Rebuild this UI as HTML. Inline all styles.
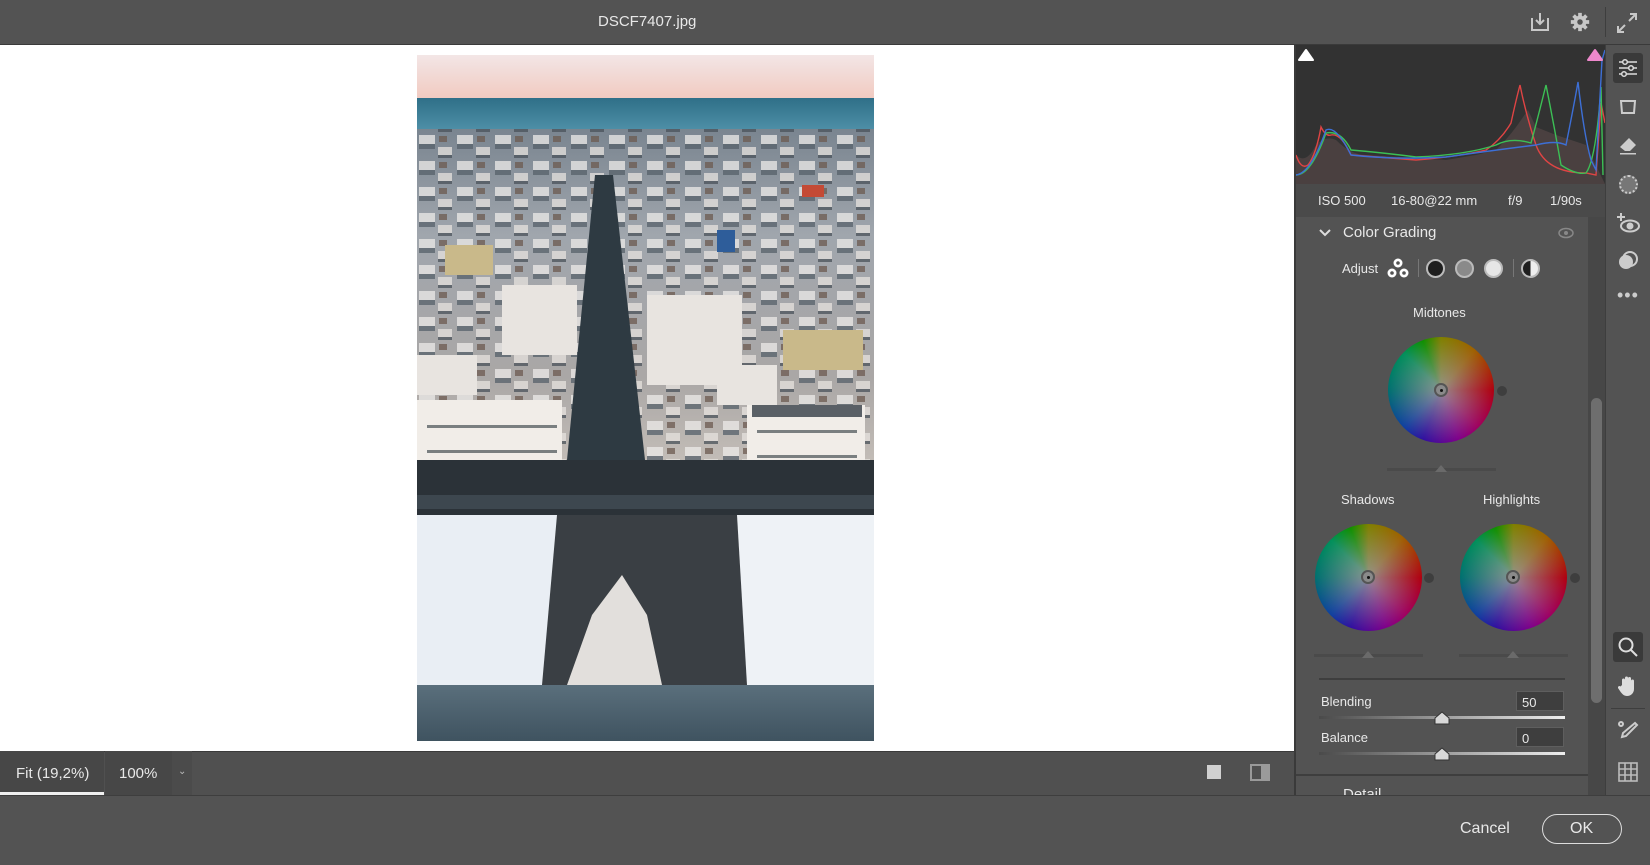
<!DOCTYPE html>
<html><head><meta charset="utf-8"><style>
*{margin:0;padding:0;box-sizing:border-box}
body{width:1650px;height:865px;background:#535353;font-family:"Liberation Sans",sans-serif;color:#e6e6e6;position:relative;overflow:hidden}
.abs{position:absolute}
.t{position:absolute;font-size:13px;color:#e8e8e8;white-space:nowrap}
</style></head><body>
<div class="abs" style="left:0;top:0;width:1650px;height:45px;background:#535353;border-bottom:1px solid #3a3a3a"></div>
<div class="t" style="left:598px;top:13px;font-size:15px">DSCF7407.jpg</div>
<svg class="abs" style="left:1528px;top:10px" width="24" height="24" viewBox="0 0 24 24" fill="none" stroke="#c8c8c8" stroke-width="2"><path d="M4 8v12h16V8M12 3v11M8 10l4 4 4-4"/></svg>
<svg class="abs" style="left:1569px;top:11px" width="22" height="22" viewBox="0 0 24 24"><circle cx="12" cy="12" r="7" fill="#c8c8c8"/><g stroke="#c8c8c8" stroke-width="4"><path d="M12 2v20M2 12h20M5 5l14 14M19 5L5 19"/></g><circle cx="12" cy="12" r="3" fill="#535353"/></svg>
<div class="abs" style="left:1605px;top:7px;width:1px;height:30px;background:#3e3e3e"></div>
<svg class="abs" style="left:1615px;top:11px" width="24" height="24" viewBox="0 0 24 24" fill="none" stroke="#c8c8c8" stroke-width="2"><path d="M14 10l7-7M15 3h6v6M10 14l-7 7M3 15v6h6"/></svg>

<div class="abs" style="left:0;top:45px;width:1294px;height:706px;background:#fff"></div>
<svg class="abs" style="left:417px;top:55px" width="457" height="686" viewBox="0 0 457 686" preserveAspectRatio="none">
<defs>
<linearGradient id="sky" x1="0" y1="0" x2="0" y2="1"><stop offset="0" stop-color="#f3e6e6"/><stop offset="1" stop-color="#f1c9bf"/></linearGradient>
<linearGradient id="sea" x1="0" y1="0" x2="0" y2="1"><stop offset="0" stop-color="#2f6f88"/><stop offset="1" stop-color="#4f90a8"/></linearGradient>
<linearGradient id="city" x1="0" y1="0" x2="0" y2="1"><stop offset="0" stop-color="#7a8590"/><stop offset=".3" stop-color="#a0a6ad"/><stop offset=".7" stop-color="#aaa7a6"/><stop offset="1" stop-color="#c9c2bb"/></linearGradient>
<pattern id="bld" width="38" height="26" patternUnits="userSpaceOnUse"><rect width="38" height="26" fill="none"/><rect x="2" y="2" width="16" height="9" fill="#eceae8"/><rect x="2" y="11" width="16" height="5" fill="#56606a"/><rect x="21" y="14" width="14" height="8" fill="#e6e2de"/><rect x="21" y="22" width="14" height="3" fill="#4a525a"/><rect x="22" y="3" width="8" height="6" fill="#6c5a50"/></pattern>
<linearGradient id="wall" x1="0" y1="0" x2="0" y2="1"><stop offset="0" stop-color="#5a6f7c"/><stop offset="1" stop-color="#3f5360"/></linearGradient>
</defs>
<rect width="457" height="45" fill="url(#sky)"/>
<rect y="43" width="457" height="33" fill="url(#sea)"/>
<rect y="74" width="457" height="355" fill="url(#city)"/>
<rect y="74" width="457" height="340" fill="url(#bld)" opacity=".75"/>
<g fill="#e8e4e0"><rect x="0" y="300" width="60" height="40"/><rect x="85" y="230" width="75" height="70"/><rect x="230" y="240" width="95" height="90"/><rect x="300" y="310" width="60" height="40"/></g>
<g fill="#c9b98a"><rect x="28" y="190" width="48" height="30"/><rect x="366" y="275" width="80" height="40"/></g>
<rect x="180" y="120" width="3" height="3" fill="#c33"/><rect x="385" y="130" width="22" height="12" fill="#c44a35"/><rect x="300" y="175" width="18" height="22" fill="#2e5d9a"/>
<g fill="#f1ede8"><rect x="0" y="345" width="145" height="100"/><rect x="330" y="350" width="118" height="95"/></g>
<g fill="#7a7f80"><rect x="10" y="370" width="130" height="3"/><rect x="10" y="395" width="130" height="3"/><rect x="340" y="375" width="100" height="3"/><rect x="340" y="400" width="100" height="3"/></g>
<rect x="335" y="350" width="110" height="12" fill="#5a6066"/>
<polygon points="178,120 196,120 228,405 150,405" fill="#2e3a42"/>
<rect y="405" width="457" height="55" fill="#2b3238"/>
<rect y="440" width="457" height="14" fill="#3d474f"/>
<polygon points="0,460 140,460 125,630 0,630" fill="#e9eef4"/>
<polygon points="320,460 457,460 457,630 330,630" fill="#eef2f6"/>
<polygon points="140,460 320,460 330,630 125,630" fill="#3a3f44"/>
<polygon points="175,560 205,520 230,560 245,630 150,630" fill="#e2dfdc"/>
<rect y="630" width="457" height="56" fill="url(#wall)"/>
</svg>

<div class="abs" style="left:0;top:751px;width:1294px;height:44px;background:#505050;border-top:1px solid #3a3a3a"></div>
<div class="abs" style="left:0;top:751px;width:104px;height:44px;background:#474747;border-bottom:3px solid #f0f0f0"></div>
<div class="t" style="left:16px;top:765px;font-size:15px">Fit (19,2%)</div>
<div class="abs" style="left:105px;top:751px;width:67px;height:44px;background:#474747"></div>
<div class="t" style="left:119px;top:765px;font-size:15px">100%</div>
<div class="abs" style="left:172px;top:751px;width:20px;height:44px;background:#4b4b4b"></div>
<div class="t" style="left:178px;top:766px;font-size:10px;color:#bbb">&#8964;</div>
<div class="abs" style="left:1207px;top:765px;width:14px;height:14px;background:#d0d0d0"></div>
<div class="abs" style="left:1250px;top:764px;width:20px;height:17px;border:2px solid #9a9a9a;border-right-width:9px"></div>

<div class="abs" style="left:1294px;top:45px;width:311px;height:750px;background:#535353;border-left:2px solid #3a3a3a"></div>
<div class="abs" style="left:1296px;top:45px;width:309px;height:139px;background:#323232"></div>
<svg class="abs" style="left:1296px;top:45px" width="309" height="139" viewBox="0 0 309 139">
<path d="M0 139 L0 110 Q10 120 20 100 Q30 90 40 95 Q55 110 70 110 L150 115 L180 110 L200 105 Q215 90 225 75 L232 65 L240 82 L260 90 L290 100 L309 139Z" fill="#4a4040"/>
<g fill="none" stroke-width="1.4">
<path d="M0 110 Q5 125 12 120 Q20 110 25 82 Q30 92 35 90 Q45 88 55 110 Q80 112 120 115 Q160 112 190 105 Q205 95 215 78 Q220 55 224 40 Q230 70 240 100 Q250 128 290 128 L300 130 L305 58 L309 78" stroke="#e04444"/>
<path d="M0 130 Q15 130 30 88 Q45 85 55 105 Q90 108 120 112 Q170 110 200 100 Q215 92 235 98 Q240 80 250 40 Q258 80 265 120 Q280 130 290 128 Q300 115 305 42 L307 130" stroke="#3cbf55"/>
<path d="M0 130 Q15 128 30 85 Q40 80 55 110 Q100 115 150 112 Q200 105 240 100 Q260 95 270 100 Q278 60 282 37 Q288 90 295 115 L300 125 L306 15 L309 5" stroke="#3d6fd6"/>
</g></svg>
<svg class="abs" style="left:1297px;top:46px" width="18" height="16"><path d="M2 14 L9 4 L16 14Z" fill="#fff" stroke="#fff" stroke-width="2" stroke-linejoin="round"/></svg>
<svg class="abs" style="left:1586px;top:46px" width="18" height="16"><path d="M2 14 L9 4 L16 14Z" fill="#ee88cc" stroke="#ee88cc" stroke-width="2" stroke-linejoin="round"/></svg>
<div class="abs" style="left:1296px;top:184px;width:309px;height:33px;background:#4a4a4a"></div>
<div class="t" style="left:1318px;top:193px">ISO 500</div>
<div class="t" style="left:1391px;top:193px">16-80@22 mm</div>
<div class="t" style="left:1508px;top:193px">f/9</div>
<div class="t" style="left:1550px;top:193px">1/90s</div>
<div class="abs" style="left:1296px;top:217px;width:292px;height:560px;background:#535353"></div>
<div class="abs" style="left:1588px;top:217px;width:17px;height:578px;background:#474747"></div>
<div class="abs" style="left:1591px;top:398px;width:11px;height:305px;border-radius:6px;background:#6e6e6e"></div>
<svg class="abs" style="left:1318px;top:227px" width="14" height="12"><path d="M2 3l5 5 5-5" fill="none" stroke="#ddd" stroke-width="2"/></svg>
<div class="t" style="left:1343px;top:224px;font-size:15px">Color Grading</div>
<svg class="abs" style="left:1557px;top:226px" width="18" height="14"><ellipse cx="9" cy="7" rx="7" ry="4.5" fill="none" stroke="#888" stroke-width="1.5"/><circle cx="9" cy="7" r="2" fill="#888"/></svg>
<div class="t" style="left:1342px;top:261px">Adjust</div>
<svg class="abs" style="left:1386px;top:257px" width="24" height="24"><g fill="#fff"><circle cx="12" cy="6" r="4.5"/><circle cx="6" cy="16" r="4.5"/><circle cx="18" cy="16" r="4.5"/></g><g fill="#535353"><circle cx="12" cy="6" r="1.8"/><circle cx="6" cy="16" r="1.8"/><circle cx="18" cy="16" r="1.8"/></g></svg>
<div class="abs" style="left:1418px;top:259px;width:1px;height:18px;background:#777"></div>
<div class="abs" style="left:1426px;top:259px;width:19px;height:19px;border-radius:50%;background:#1e1e1e;border:2px solid #bbb"></div>
<div class="abs" style="left:1455px;top:259px;width:19px;height:19px;border-radius:50%;background:#8a8a8a;border:2px solid #bbb"></div>
<div class="abs" style="left:1484px;top:259px;width:19px;height:19px;border-radius:50%;background:#e6e6e6;border:2px solid #bbb"></div>
<div class="abs" style="left:1513px;top:259px;width:1px;height:18px;background:#777"></div>
<div class="abs" style="left:1521px;top:259px;width:19px;height:19px;border-radius:50%;background:linear-gradient(90deg,#1e1e1e 50%,#eee 50%);border:2px solid #bbb"></div>

<div class="t" style="left:1413px;top:305px">Midtones</div>
<div class="t" style="left:1341px;top:492px">Shadows</div>
<div class="t" style="left:1483px;top:492px">Highlights</div>

<div class="abs" style="left:1388px;top:337px;width:106px;height:106px;border-radius:50%;background:radial-gradient(circle,rgba(150,150,150,.9) 0%,rgba(150,150,150,0) 70%),conic-gradient(from 0deg,#808000,#a06000 40deg,#b00010 90deg,#a00060 135deg,#80008a 160deg,#3010a0 200deg,#1040a0 225deg,#007070 270deg,#00905a 315deg,#109000 340deg,#808000)"></div>
<div class="abs" style="left:1434px;top:383px;width:14px;height:14px;border-radius:50%;border:2px solid #555;background:#8a8a8a"></div>
<div class="abs" style="left:1440px;top:389px;width:3px;height:3px;border-radius:50%;background:#111"></div>
<div class="abs" style="left:1497px;top:386px;width:10px;height:10px;border-radius:50%;background:#3e3e3e"></div>
<div class="abs" style="left:1387px;top:468px;width:109px;height:3px;background:#4a4a4a"></div>
<svg class="abs" style="left:1434px;top:463px" width="14" height="10"><path d="M1 9L7 2l6 7Z" fill="#6a6a6a"/></svg>

<div class="abs" style="left:1315px;top:524px;width:107px;height:107px;border-radius:50%;background:radial-gradient(circle,rgba(150,150,150,.9) 0%,rgba(150,150,150,0) 70%),conic-gradient(from 0deg,#808000,#a06000 40deg,#b00010 90deg,#a00060 135deg,#80008a 160deg,#3010a0 200deg,#1040a0 225deg,#007070 270deg,#00905a 315deg,#109000 340deg,#808000)"></div>
<div class="abs" style="left:1361px;top:570px;width:14px;height:14px;border-radius:50%;border:2px solid #555;background:#8a8a8a"></div>
<div class="abs" style="left:1367px;top:576px;width:3px;height:3px;border-radius:50%;background:#111"></div>
<div class="abs" style="left:1424px;top:573px;width:10px;height:10px;border-radius:50%;background:#3e3e3e"></div>
<div class="abs" style="left:1314px;top:654px;width:109px;height:3px;background:#4a4a4a"></div>
<svg class="abs" style="left:1361px;top:649px" width="14" height="10"><path d="M1 9L7 2l6 7Z" fill="#6a6a6a"/></svg>

<div class="abs" style="left:1460px;top:524px;width:107px;height:107px;border-radius:50%;background:radial-gradient(circle,rgba(150,150,150,.9) 0%,rgba(150,150,150,0) 70%),conic-gradient(from 0deg,#808000,#a06000 40deg,#b00010 90deg,#a00060 135deg,#80008a 160deg,#3010a0 200deg,#1040a0 225deg,#007070 270deg,#00905a 315deg,#109000 340deg,#808000)"></div>
<div class="abs" style="left:1506px;top:570px;width:14px;height:14px;border-radius:50%;border:2px solid #555;background:#8a8a8a"></div>
<div class="abs" style="left:1512px;top:576px;width:3px;height:3px;border-radius:50%;background:#111"></div>
<div class="abs" style="left:1570px;top:573px;width:10px;height:10px;border-radius:50%;background:#3e3e3e"></div>
<div class="abs" style="left:1459px;top:654px;width:109px;height:3px;background:#4a4a4a"></div>
<svg class="abs" style="left:1506px;top:649px" width="14" height="10"><path d="M1 9L7 2l6 7Z" fill="#6a6a6a"/></svg>

<div class="abs" style="left:1319px;top:678px;width:246px;height:2px;background:#3e3e3e"></div>
<div class="t" style="left:1321px;top:694px">Blending</div>
<div class="abs" style="left:1516px;top:691px;width:48px;height:20px;background:#3e3e3e;border:1px solid #5e5e5e"></div>
<div class="t" style="left:1522px;top:695px">50</div>
<div class="abs" style="left:1319px;top:716px;width:246px;height:3px;background:linear-gradient(90deg,#4a4a4a,#eee)"></div>
<svg class="abs" style="left:1434px;top:711px" width="16" height="14"><path d="M1 13V7L8 1l7 6v6Z" fill="#d8d8d8" stroke="#333"/></svg>
<div class="t" style="left:1321px;top:730px">Balance</div>
<div class="abs" style="left:1516px;top:727px;width:48px;height:20px;background:#3e3e3e;border:1px solid #5e5e5e"></div>
<div class="t" style="left:1522px;top:731px">0</div>
<div class="abs" style="left:1319px;top:752px;width:246px;height:3px;background:linear-gradient(90deg,#4a4a4a,#eee)"></div>
<svg class="abs" style="left:1434px;top:747px" width="16" height="14"><path d="M1 13V7L8 1l7 6v6Z" fill="#d8d8d8" stroke="#333"/></svg>
<div class="abs" style="left:1296px;top:774px;width:292px;height:2px;background:#3e3e3e"></div>
<div class="abs" style="left:1296px;top:776px;width:292px;height:19px;overflow:hidden"><div class="t" style="left:47px;top:10px;font-size:15px">Detail</div></div>

<div class="abs" style="left:1605px;top:45px;width:45px;height:750px;background:#535353;border-left:1px solid #3e3e3e"></div>
<div class="abs" style="left:1613px;top:53px;width:30px;height:30px;background:#3a3a3a;border-radius:3px"></div>
<svg class="abs" style="left:1617px;top:57px" width="22" height="22" viewBox="0 0 22 22" fill="none" stroke="#ddd" stroke-width="1.5"><path d="M2 5h18M2 11h18M2 17h18"/><circle cx="8" cy="5" r="2.3" fill="#3a3a3a"/><circle cx="14" cy="11" r="2.3" fill="#3a3a3a"/><circle cx="7" cy="17" r="2.3" fill="#3a3a3a"/></svg>
<svg class="abs" style="left:1617px;top:97px" width="22" height="20" fill="none" stroke="#ccc" stroke-width="2"><path d="M4 4h14l-1 12H5z"/></svg>
<svg class="abs" style="left:1617px;top:135px" width="22" height="20" fill="#ccc"><path d="M3 12L12 3l7 7-6 6H8zM3 18h16v1.5H3z"/></svg>
<div class="abs" style="left:1619px;top:175px;width:19px;height:19px;border-radius:50%;border:2px dotted #ccc;background:#777"></div>
<svg class="abs" style="left:1615px;top:212px" width="26" height="22" fill="none" stroke="#ccc" stroke-width="2"><path d="M6 1v8M2 5h8"/><ellipse cx="15" cy="14" rx="9" ry="5.5"/><circle cx="15" cy="14" r="2.5" fill="#ccc"/></svg>
<svg class="abs" style="left:1617px;top:250px" width="22" height="22"><circle cx="9" cy="12" r="7" fill="#ccc"/><circle cx="13" cy="9" r="7" fill="none" stroke="#ccc" stroke-width="2"/></svg>
<div class="t" style="left:1617px;top:285px;font-size:18px;color:#ccc;letter-spacing:1px">•••</div>
<div class="abs" style="left:1613px;top:632px;width:30px;height:30px;background:#3a3a3a;border-radius:3px"></div>
<svg class="abs" style="left:1617px;top:636px" width="22" height="22" fill="none" stroke="#ddd" stroke-width="2"><circle cx="9" cy="9" r="6.5"/><path d="M14 14l6 6"/></svg>
<svg class="abs" style="left:1618px;top:675px" width="20" height="22" fill="#ddd"><path d="M4 10V5a1.5 1.5 0 013 0v4V3a1.5 1.5 0 013 0v6V3.5a1.5 1.5 0 013 0V10V6a1.5 1.5 0 013 0v8c0 4-3 7-7 7-3 0-5-2-7-5l-2-3a1.5 1.5 0 012.5-1.5z"/></svg>
<div class="abs" style="left:1611px;top:708px;width:34px;height:1px;background:#3e3e3e"></div>
<svg class="abs" style="left:1617px;top:720px" width="22" height="22" fill="none" stroke="#ccc" stroke-width="2"><path d="M18 3l2 2-11 11-4 1 1-4z"/><circle cx="4" cy="4" r="2"/></svg>
<svg class="abs" style="left:1617px;top:761px" width="22" height="22" fill="none" stroke="#bbb" stroke-width="1.6"><rect x="2" y="2" width="18" height="18"/><path d="M8 2v18M14 2v18M2 8h18M2 14h18"/></svg>

<div class="abs" style="left:0;top:795px;width:1650px;height:70px;background:#535353;border-top:1px solid #3e3e3e"></div>
<div class="t" style="left:1460px;top:820px;font-size:16px">Cancel</div>
<div class="abs" style="left:1542px;top:814px;width:80px;height:30px;border:1.5px solid #ddd;border-radius:16px"></div>
<div class="t" style="left:1570px;top:820px;font-size:16px">OK</div>
</body></html>
